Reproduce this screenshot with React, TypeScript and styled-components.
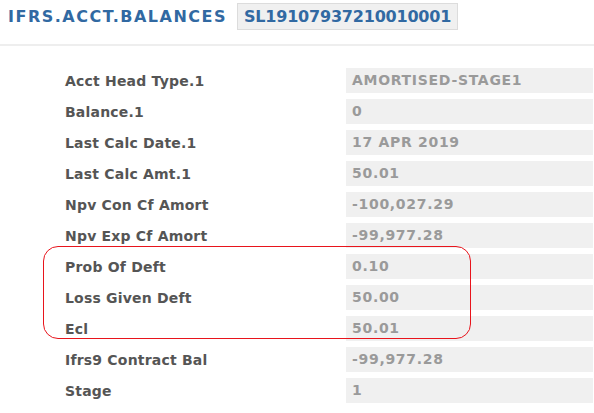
import React from 'react';
import styled, { createGlobalStyle } from 'styled-components';

const GlobalStyle = createGlobalStyle`
  html, body {
    margin: 0;
    padding: 0;
    background: #fff;
  }
  body {
    font-family: "DejaVu Sans", "Liberation Sans", sans-serif;
  }
`;

const rows: { label: string; value: string }[] = [
  { label: 'Acct Head Type.1', value: 'AMORTISED-STAGE1' },
  { label: 'Balance.1', value: '0' },
  { label: 'Last Calc Date.1', value: '17 APR 2019' },
  { label: 'Last Calc Amt.1', value: '50.01' },
  { label: 'Npv Con Cf Amort', value: '-100,027.29' },
  { label: 'Npv Exp Cf Amort', value: '-99,977.28' },
  { label: 'Prob Of Deft', value: '0.10' },
  { label: 'Loss Given Deft', value: '50.00' },
  { label: 'Ecl', value: '50.01' },
  { label: 'Ifrs9 Contract Bal', value: '-99,977.28' },
  { label: 'Stage', value: '1' },
];

function Row({ label, value }: { label: string; value: string }) {
  return (
    <FieldRow>
      <Label>{label}</Label>
      <Value>{value}</Value>
    </FieldRow>
  );
}

function App() {
  const before = rows.slice(0, 6);
  const marked = rows.slice(6, 9);
  const after = rows.slice(9);
  return (
    <Page>
      <GlobalStyle />
      <Header>
        <Title>IFRS.ACCT.BALANCES</Title>
        <RecordId>SL19107937210010001</RecordId>
      </Header>
      <List>
        {before.map((r) => (
          <Row key={r.label} {...r} />
        ))}
        {/* rows marked with the red outline */}
        <Group>
          {marked.map((r) => (
            <Row key={r.label} {...r} />
          ))}
          <Highlight />
        </Group>
        {after.map((r) => (
          <Row key={r.label} {...r} />
        ))}
      </List>
    </Page>
  );
}

export default App;

const Page = styled.div`
  width: 594px;
  height: 413px;
  overflow: hidden;
  background: #fff;
`;

const Header = styled.div`
  display: flex;
  align-items: flex-start;
  gap: 10px;
  height: 46px;
  padding: 3px 8px 0;
  box-sizing: border-box;
  border-bottom: 2px solid #eeeeee;
`;

const Title = styled.h1`
  margin: 0;
  height: 27px;
  line-height: 27px;
  font-size: 16px;
  font-weight: 700;
  color: #3169a2;
  letter-spacing: 1.5px;
`;

const RecordId = styled.div`
  height: 25px;
  line-height: 25px;
  padding: 0 6px;
  background: #f0f0f0;
  border: 1px solid #dcdcdc;
  font-size: 16px;
  font-weight: 700;
  letter-spacing: -0.2px;
  color: #3169a2;
`;

const List = styled.div`
  display: flex;
  flex-direction: column;
  gap: 6px;
  padding: 22px 1px 0 65px;
`;

const Group = styled.div`
  position: relative;
  display: flex;
  flex-direction: column;
  gap: 6px;
`;

const Highlight = styled.div`
  position: absolute;
  left: -22px;
  top: -8px;
  width: 428px;
  height: 93px;
  border: 1.5px solid #e8141c;
  border-radius: 15px;
  box-sizing: border-box;
  pointer-events: none;
`;

const FieldRow = styled.div`
  display: grid;
  grid-template-columns: 281px 1fr;
  align-items: center;
  height: 25px;
`;

const Label = styled.div`
  font-size: 14px;
  font-weight: 700;
  letter-spacing: 0.2px;
  color: #555;
`;

const Value = styled.div`
  height: 25px;
  line-height: 25px;
  padding-left: 6px;
  background: #f0f0f0;
  font-size: 14px;
  font-weight: 700;
  letter-spacing: 0.7px;
  color: #9a9a9a;
`;
